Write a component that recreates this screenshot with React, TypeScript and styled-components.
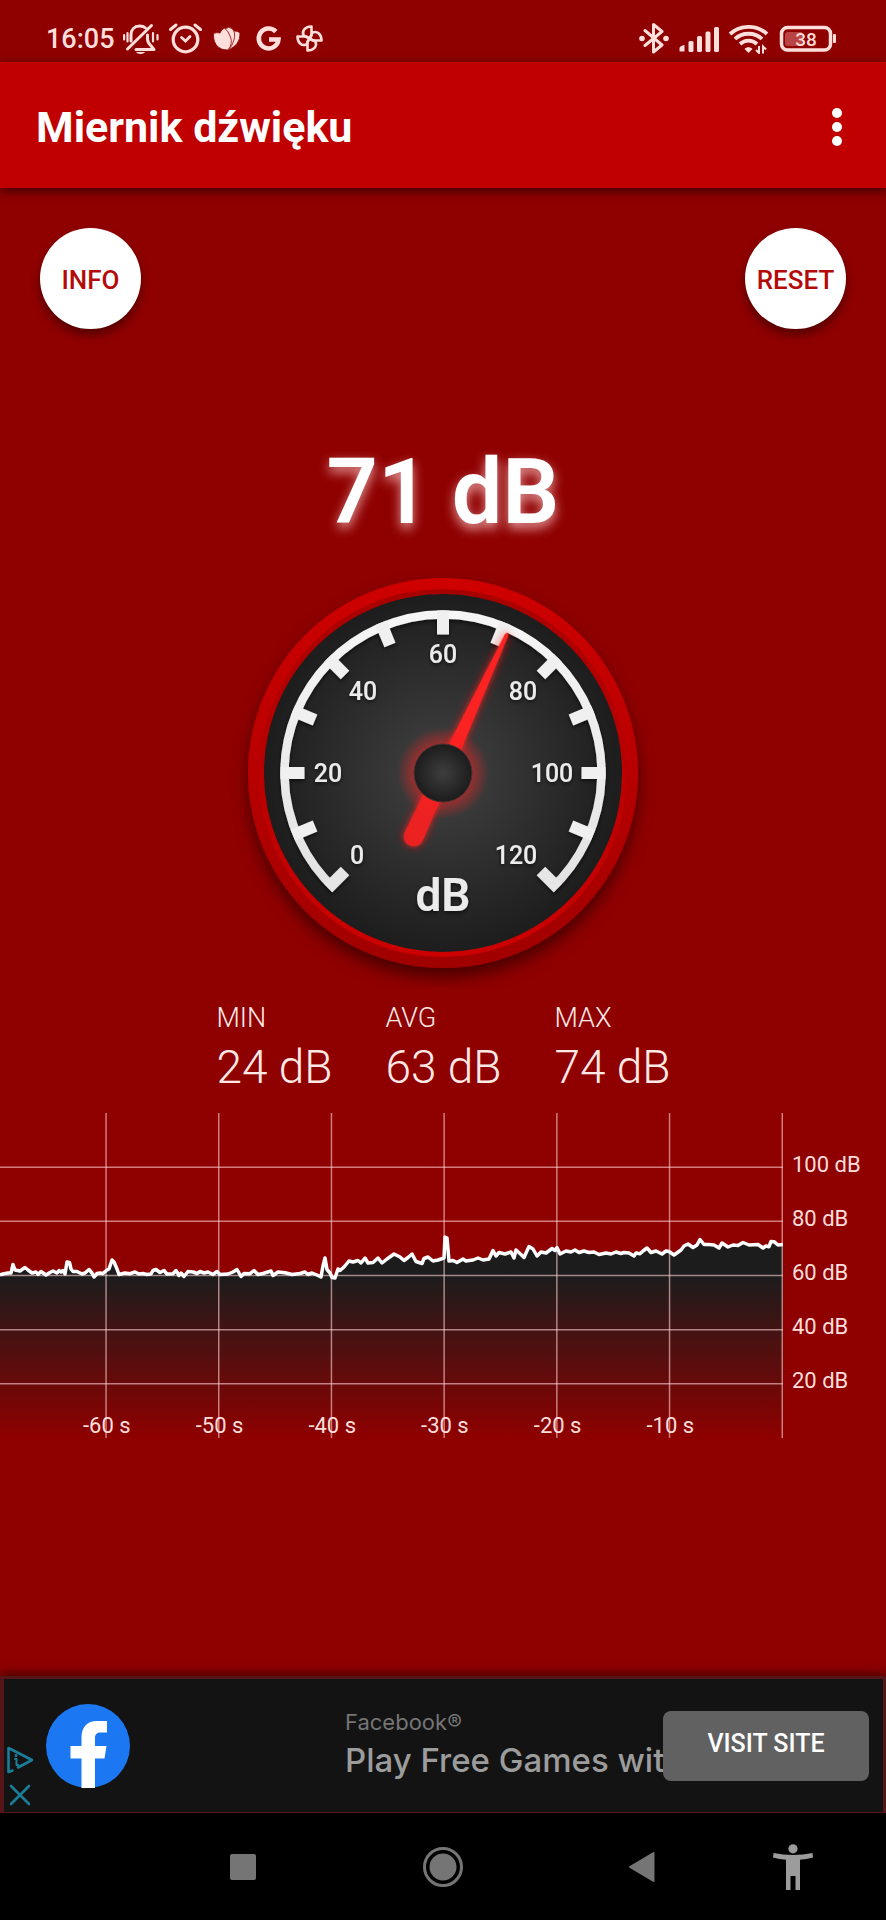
import React from 'react';
import styled, { createGlobalStyle } from 'styled-components';

const GlobalStyle = createGlobalStyle`
  * { box-sizing: border-box; }
  html, body, #root { height: 100%; }
  body {
    margin: 0;
    background: #8f0000;
    font-family: Roboto, "Liberation Sans", sans-serif;
  }
  button { border: 0; padding: 0; font: inherit; cursor: pointer; }
`;

const INK = '#ffdedb';

const Screen = styled.div`
  min-height: 100%;
  display: flex;
  flex-direction: column;
  background: #8f0000;
`;

/* ---------- status bar ---------- */

const StatusBar = styled.div`
  height: 62px;
  flex: none;
  display: flex;
  justify-content: space-between;
  padding: 22px 48px 0 46px;
  color: ${INK};
`;

const StatusGroup = styled.div`
  display: flex;
  align-items: flex-start;
  gap: 8px;
`;

const Clock = styled.span`
  font-size: 27px;
  line-height: 34px;
  font-weight: 500;
`;

const StatusIcon = styled.svg`
  height: 32px;
  flex: none;
  display: block;
`;

const StatusIcons = () => (
  <>
    <StatusIcon width="37" viewBox="1 0 37 32" fill="none" stroke={INK} strokeWidth="3" strokeLinecap="round">
      <path d="M9 19V13C9 7.500 12.500 4 17.500 4C20 4 22 4.600 23.500 6" />
      <path d="M25.500 13V17C25.500 22 29 23 32 27.500H14" strokeLinejoin="round" />
      <path d="M5.500 27L29.500 3.500" />
      <path d="M14 30H23C22 32.500 15 32.500 14 30Z" fill={INK} stroke="none" />
      <path d="M2.100 13V17.500M5.500 11V19.500M31 11V19.500M35.500 13V17.500" strokeWidth="2.200" />
    </StatusIcon>
    <StatusIcon width="34" viewBox="1 0 34 32" fill="none" stroke={INK} strokeWidth="3.300" strokeLinecap="round">
      <circle cx="18.500" cy="17.500" r="12.300" />
      <path d="M3.500 7.500L9 3M28 3L33.500 7.500" strokeWidth="3" />
      <path d="M14.500 15.500L18.500 19L23 14.500" strokeWidth="2.800" />
    </StatusIcon>
    <StatusIcon width="34" viewBox="0 0 34 32" fill={INK} stroke="#8f0000" strokeWidth="0.800">
      <path d="M23.500 9Q27.500 8.500 30 11Q30.500 23 18 28Q22 18 23.500 9Z" />
      <path d="M15 7Q18.500 4 22 6.500Q26 10 24 18Q22 25 18 28Z" />
      <path d="M3.500 11.500Q3 20 8 25Q12.500 28.500 18 28Q23 22 20.500 15Q18.500 9 14.500 6Q11 7.500 10 11Q7 10 3.500 11.500Z" />
    </StatusIcon>
    <StatusIcon width="34" viewBox="0 0 34 32" fill="none" stroke={INK} strokeWidth="4.500">
      <path d="M23.800 9.600A9.900 9.900 0 1 0 26.500 17.500H17" />
    </StatusIcon>
    <StatusIcon width="34" viewBox="0 0 34 32" fill="none" stroke={INK} strokeWidth="2.600" strokeLinejoin="round">
      {[0, 90, 180, 270].map((a) => (
        <path key={a} transform={`rotate(${a} 15.500 16.500)`} d="M17.500 4.500C11.500 4.500 7.500 8.500 9.500 13.500L15.500 16.500L17.500 13.500Z" />
      ))}
    </StatusIcon>
  </>
);

const Connectivity = () => (
  <>
    <StatusIcon width="32" viewBox="0 0 32 32" fill="none" stroke={INK} strokeWidth="3" strokeLinejoin="round" strokeLinecap="round">
      <path d="M7 8.500L24 23L15.500 30V2.500L24 9.500L7 23.500" />
      <circle cx="4" cy="16.500" r="2.800" fill={INK} stroke="none" />
      <circle cx="28" cy="16.500" r="2.800" fill={INK} stroke="none" />
    </StatusIcon>
    <StatusIcon width="42" viewBox="0 0 42 32" fill={INK}>
      <path d="M1.500 29.500V26Q2 24 6.500 23V29.500Z" />
      <rect x="10.500" y="19" width="5" height="11" rx="1.500" />
      <rect x="19" y="14" width="5" height="16" rx="1.500" />
      <rect x="27.500" y="9.500" width="5" height="20.500" rx="1.500" />
      <rect x="36" y="5" width="5" height="25" rx="1.500" />
    </StatusIcon>
    <StatusIcon width="42" viewBox="0 0 42 32" fill="none" stroke={INK} strokeWidth="3.800">
      <path d="M2 12C12 2.500 29 2.500 39 12" />
      <path d="M7 17C14 10 27 10 34 17" />
      <path d="M12 22C17 17.500 24 17.500 29 22" />
      <path d="M16.500 27C18.500 24.500 22.500 24.500 24.500 27L20.500 31Z" fill={INK} stroke="none" />
      <path d="M31 24V31L28 28M35 31.500V24.500L38 27.500" strokeWidth="2" />
    </StatusIcon>
    <StatusIcon width="60" viewBox="0 0 60 32" fill="none">
      <rect x="3.500" y="5.500" width="49" height="22.500" rx="6" stroke={INK} strokeWidth="3.500" />
      <path d="M7 13Q7 10 10 10H24V24H10Q7 24 7 21Z" fill="#ba4444" />
      <rect x="55" y="12" width="3" height="9" rx="1" fill={INK} />
      <text x="28" y="24" textAnchor="middle" fontFamily="Roboto" fontSize="19" fontWeight="500" fill={INK}>38</text>
    </StatusIcon>
  </>
);

/* ---------- app bar ---------- */

const AppBar = styled.header`
  height: 126px;
  flex: none;
  display: flex;
  align-items: center;
  justify-content: space-between;
  padding: 3px 31px 0 36px;
  background: #c00000;
  box-shadow: 0 3px 10px rgba(0, 0, 0, 0.6);
`;

const Title = styled.h1`
  margin: 0;
  font-size: 43px;
  line-height: 50px;
  font-weight: 700;
  color: #fff;
`;

const MenuButton = styled.button`
  width: 36px;
  height: 60px;
  display: flex;
  flex-direction: column;
  align-items: center;
  justify-content: center;
  gap: 4px;
  background: none;
`;

const Dot = styled.span`
  width: 10px;
  height: 10px;
  border-radius: 50%;
  background: #fff;
`;

/* ---------- meter ---------- */

const Main = styled.main`
  flex: 1;
  display: flex;
  flex-direction: column;
  align-items: center;
  padding-top: 40px;
`;

const Actions = styled.div`
  align-self: stretch;
  display: flex;
  justify-content: space-between;
  padding: 0 40px;
`;

const RoundButton = styled.button`
  && {
    width: 101px;
    height: 101px;
    padding-top: 2px;
    border-radius: 50%;
    background: #fff;
    color: #b50a0a;
    font-size: 26px;
    line-height: 32px;
    font-weight: 500;
    box-shadow: 0 6px 10px rgba(0, 0, 0, 0.4);
  }
`;

const Reading = styled.output`
  margin-top: 110px;
  font-size: 90px;
  line-height: 108px;
  font-weight: 600;
  color: #fff;
  text-shadow: 0 5px 12px rgba(255, 200, 200, 0.8);
`;

const GaugeArt = styled.svg`
  display: block;
  width: 430px;
  height: 430px;
  margin-top: 11px;
  font-family: Roboto, "Liberation Sans", sans-serif;
`;

const MARKS: [string, number, number][] = [
  ['0', -86, 91],
  ['20', -115, 9],
  ['40', -80, -73],
  ['60', 0, -110],
  ['80', 80, -73],
  ['100', 109, 9],
  ['120', 73, 91],
];

const Gauge = ({ value }: { value: number }) => (
  <GaugeArt viewBox="-215 -215 430 430" role="img" aria-label={`${value} dB`}>
    <defs>
      <radialGradient id="face">
        <stop offset="0" stopColor="#424242" />
        <stop offset="1" stopColor="#1d1d1d" />
      </radialGradient>
      <linearGradient id="rim" x1="0" y1="0" x2="0" y2="1">
        <stop offset="0" stopColor="#cf0000" />
        <stop offset="1" stopColor="#a00000" />
      </linearGradient>
      <linearGradient id="lip" x1="0" y1="0" x2="0" y2="1">
        <stop offset="0" stopColor="#a80000" />
        <stop offset="1" stopColor="#cc0000" />
      </linearGradient>
      <radialGradient id="hub">
        <stop offset="0" stopColor="#3e3e3e" />
        <stop offset="1" stopColor="#1c1c1c" />
      </radialGradient>
      <radialGradient id="halo">
        <stop offset="0.600" stopColor="#ff2020" stopOpacity="0.500" />
        <stop offset="1" stopColor="#ff2020" stopOpacity="0" />
      </radialGradient>
      <linearGradient id="scale" gradientUnits="userSpaceOnUse" x1="0" y1="-163" x2="0" y2="120">
        <stop offset="0" stopColor="#f6f6f6" />
        <stop offset="1" stopColor="#e2e2e2" />
      </linearGradient>
      <filter id="drop" x="-20%" y="-20%" width="140%" height="140%">
        <feDropShadow dx="0" dy="9" stdDeviation="8" floodColor="#000" floodOpacity="0.500" />
      </filter>
      <filter id="soft" x="-20%" y="-20%" width="140%" height="140%">
        <feDropShadow dx="0" dy="2" stdDeviation="2" floodColor="#000" floodOpacity="0.600" />
      </filter>
      <filter id="glow" filterUnits="userSpaceOnUse" x="-60" y="-190" width="120" height="300">
        <feDropShadow dx="0" dy="0" stdDeviation="4" floodColor="#ff1a1a" floodOpacity="0.800" />
      </filter>
    </defs>
    <circle r="195" fill="url(#rim)" filter="url(#drop)" />
    <circle r="184" fill="url(#lip)" />
    <circle r="179" fill="url(#face)" />
    <g filter="url(#soft)">
      <path d="M-108.100 115.900A158.500 158.500 0 1 1 108.100 115.900" fill="none" stroke="url(#scale)" strokeWidth="8.500" />
      {Array.from({ length: 13 }, (_, i) => (
        <g key={i} transform={`rotate(${-135 + i * 22.5})`}>
          <rect x="-6" y="-162.500" width="12" height="24" fill={i % 12 === 0 ? '#e6e6e6' : '#f0f0f0'} />
        </g>
      ))}
    </g>
    <g fill="#ebebeb" textAnchor="middle" fontSize="25" fontWeight="500" filter="url(#soft)">
      {MARKS.map(([label, x, y]) => (
        <text key={label} x={x} y={y}>{label}</text>
      ))}
      <text x="0" y="138" fontSize="46" fontWeight="600">dB</text>
    </g>
    <g transform={`rotate(${(value - 60) * 2.25})`}>
      <g filter="url(#glow)" fill="#fb2222">
        <path d="M-7 -24L-2 -152Q0 -157 2 -152L7 -24Z" />
        <path d="M-9 24L-10 70A10 10 0 0 0 10 70L9 24Z" fill="#ec2222" />
      </g>
    </g>
    <circle r="46" fill="url(#halo)" />
    <circle r="29" fill="url(#hub)" stroke="#4a3030" strokeWidth="1" />
  </GaugeArt>
);

const Stats = styled.dl`
  display: flex;
  gap: 54px;
  margin: 14px 0 0;
  color: #ffe9e6;
  font-weight: 300;
`;

const Stat = styled.div`
  width: 115px;
  white-space: nowrap;
`;

const StatName = styled.dt`
  font-size: 27px;
  line-height: 32px;
`;

const StatValue = styled.dd`
  margin: 6px 0 0;
  font-size: 46px;
  line-height: 54px;
`;

/* ---------- history chart ---------- */

const Chart = styled.section`
  align-self: stretch;
  display: flex;
  margin-top: 19px;
  color: ${INK};
`;

const Plot = styled.svg`
  flex: 1;
  min-width: 0;
  height: 326px;
  display: block;
  overflow: hidden;
  font-family: Roboto, "Liberation Sans", sans-serif;
`;

const Scale = styled.ul`
  width: 103px;
  margin: 0;
  padding: 38px 0 0 9px;
  list-style: none;
  font-size: 22px;
`;

const ScaleMark = styled.li`
  height: 54px;
  line-height: 28px;
`;

const HISTORY =
  '0,161.7 4,160.7 8,160 11,160 13,151.5 15,157 20,158 25,154.5 28,157 32,160 36,159 38,161.5 41,158.5 46,162 50,159.5 53,158 57,160 59,157.5 61,159 63,157.5 65,161 67,149 69.5,149.5 71,156 73,158.5 77,158.5 82,161 85,160 89,156.5 92,160 94,164 97,160.5 100,160 103,160.5 107,157 109,156 112,147 114,149 117,156 119,161.5 125,160 130,160.7 135,159 139,161 143,160.5 147,161.5 151,161 153,157.5 156,156.5 160,159.5 164,157.5 167,161 173,160.7 176,157.5 179,162.5 181,160 184,163.5 188,158.5 193,159 197,160.5 200,158.5 204,160 208,159 213,161.5 217,158.5 220,161.5 228,161 233,159 237,156.5 241,163.5 244,160.5 250,160.7 254,157.5 258,161.5 263,160.5 271,158 273,162.5 278,159 285,159.7 292,161.5 300,160.5 305,159 308,161.5 312,160 317,162 321,164 323,153 325,145 327,156.5 330,160 332,164.5 335,165 338,156 340,157.5 344,154 349,148 353,149 358,147.5 361,150 365,145 368,150 373,149.5 378,145 382,150 387,146 394,141 397,142.5 400,144 404,147.5 408,144.5 412,141 416,148.5 422,150.5 424,145.5 428,144 433,148 438,147 444,145 445,124 447,125 449,148 453,147.5 457,149.5 463,146 466,148 473,147 478,145 483,147 489,146 493,137.5 496,143 499,139.5 505,141 511,139 514,145 516,137 521,141.5 524,144.5 529,133.5 533,136 537,143 541,139 546,140 552,135.5 555,137.5 557,134.5 560,141 566,138 571,139 575,137 579,139.5 584,138 589,139.5 594,139 599,141.5 606,140 611,141 616,139 621,140.5 624,139.5 629,140 634,143 636,140 640,140.7 643,138 647,135 651,139.5 656,138 662,141 666,138 669,138.5 674,142 681,137 684,133 688,131 693,134.5 697,132 700,126.5 704,131.5 709,131.5 714,132 719,135 722,130 728,134 733,132 738,132.5 743,129.5 749,132 758,131.5 763,135 766,133 769,133.7 771,128.5 774,128.7 778,132 783,131.5';

const LEVELS = [100, 80, 60, 40, 20];
const SECONDS = [60, 50, 40, 30, 20, 10, 0];

const History = () => (
  <Chart>
    <Plot role="img" aria-label="dB / s">
      <defs>
        <linearGradient id="fill" gradientUnits="userSpaceOnUse" x1="0" y1="163" x2="0" y2="325">
          <stop offset="0" stopColor="#1c1c1c" />
          <stop offset="1" stopColor="#1c1c1c" stopOpacity="0" />
        </linearGradient>
      </defs>
      <svg x="100%" overflow="visible">
        <g transform="translate(-783)">
          <polygon points={`0,325 ${HISTORY} 783,325`} fill="url(#fill)" />
        </g>
        <g stroke="#ffd0d0" strokeOpacity="0.600" strokeWidth="1.500">
          {LEVELS.map((level) => (
            <path key={level} d={`M-4000 ${325 - level * 2.708}H0`} />
          ))}
          {SECONDS.map((s) => (
            <path key={s} d={`M${-0.75 - s * 11.27} 0V325`} />
          ))}
        </g>
        <g transform="translate(-783)">
          <polyline points={HISTORY} fill="none" stroke="#fff" strokeWidth="3.500" strokeLinejoin="round" />
        </g>
        <g fill={INK} fontSize="22" textAnchor="middle">
          {SECONDS.filter((s) => s > 0).map((s) => (
            <text key={s} x={-s * 11.27} y="320">{`-${s} s`}</text>
          ))}
        </g>
      </svg>
    </Plot>
    <Scale>
      {LEVELS.map((level) => (
        <ScaleMark key={level}>{level} dB</ScaleMark>
      ))}
    </Scale>
  </Chart>
);

/* ---------- advert ---------- */

const Advert = styled.aside`
  height: 137px;
  flex: none;
  display: flex;
  align-items: center;
  border: solid #561518;
  border-width: 3px 3px 1px 4px;
  padding-right: 14px;
  background: #131313;
  box-shadow: 0 -2px 10px rgba(0, 0, 0, 0.6);
`;

const AdControls = styled.div`
  align-self: flex-end;
  display: flex;
  flex-direction: column;
  gap: 8px;
  width: 42px;
  padding: 0 0 2px 2px;
`;

const AdControl = styled.button`
  width: 28px;
  height: 28px;
  background: none;
  svg { display: block; }
`;

const AdLogo = styled.svg`
  width: 84px;
  height: 84px;
  flex: none;
`;

const AdText = styled.div`
  flex: 1;
  min-width: 0;
  margin-left: 215px;
  padding-bottom: 4px;
  white-space: nowrap;
  font-family: Inter, "Open Sans", sans-serif;
`;

const Advertiser = styled.div`
  font-size: 22px;
  line-height: 28px;
  color: #757575;
`;

const Headline = styled.div`
  margin-top: 4px;
  font-size: 33px;
  line-height: 40px;
  font-weight: 500;
  color: #9c9c9c;
`;

const VisitLink = styled.a`
  flex: none;
  width: 206px;
  height: 70px;
  display: flex;
  align-items: center;
  justify-content: center;
  padding-bottom: 4px;
  border-radius: 8px;
  background: #616161;
  color: #fff;
  font-size: 25px;
  line-height: 30px;
  font-weight: 500;
  text-decoration: none;
`;

/* ---------- navigation ---------- */

const NavBar = styled.nav`
  height: 107px;
  flex: none;
  display: grid;
  grid-template-columns: 144fr 198fr 202fr 196fr 106fr 40fr;
  background: #000;
`;

const NavButton = styled.button<{ $first?: boolean }>`
  grid-column-start: ${(p) => (p.$first ? 2 : 'auto')};
  display: flex;
  align-items: center;
  justify-content: center;
  background: none;
`;

export default function App() {
  return (
    <Screen>
      <GlobalStyle />
      <StatusBar>
        <StatusGroup>
          <Clock>16:05</Clock>
          <StatusIcons />
        </StatusGroup>
        <StatusGroup>
          <Connectivity />
        </StatusGroup>
      </StatusBar>
      <AppBar>
        <Title>Miernik dźwięku</Title>
        <MenuButton aria-label="Menu">
          <Dot />
          <Dot />
          <Dot />
        </MenuButton>
      </AppBar>
      <Main>
        <Actions>
          <RoundButton>INFO</RoundButton>
          <RoundButton>RESET</RoundButton>
        </Actions>
        <Reading>71 dB</Reading>
        <Gauge value={71} />
        <Stats>
          {[['MIN', 24], ['AVG', 63], ['MAX', 74]].map(([name, value]) => (
            <Stat key={name}>
              <StatName>{name}</StatName>
              <StatValue>{value} dB</StatValue>
            </Stat>
          ))}
        </Stats>
        <History />
      </Main>
      <Advert>
        <AdControls>
          <AdControl aria-label="AdChoices">
            <svg width="28" height="28" viewBox="0 0 28 28" fill="none" stroke="#1b7d98" strokeWidth="2.600" strokeLinejoin="round" strokeLinecap="round">
              <path d="M6.500 24.500L2.500 26V2L26 14L12 21.500" />
              <path d="M9 13H10.500V19H12.500" strokeWidth="2" />
              <circle cx="10" cy="9.500" r="1.500" fill="#1b7d98" stroke="none" />
            </svg>
          </AdControl>
          <AdControl aria-label="Close">
            <svg width="28" height="28" viewBox="0 0 28 28" fill="none" stroke="#1b7d98" strokeWidth="2.600" strokeLinecap="round">
              <path d="M5 4L23 22M23 4L5 22" />
            </svg>
          </AdControl>
        </AdControls>
        <AdLogo viewBox="0 0 84 84" aria-hidden="true">
          <circle cx="42" cy="42" r="42" fill="#1b78f2" />
          <path d="M35.500 84V54.500H24.500V42H35.500V34C35.500 23 41 17 51 17H61V28.500H55C50.500 28.500 49 30.500 49 34V42H60.500L58.500 54.500H49V84Z" fill="#fff" />
        </AdLogo>
        <AdText>
          <Advertiser>Facebook®</Advertiser>
          <Headline>Play Free Games wit</Headline>
        </AdText>
        <VisitLink href="#">VISIT SITE</VisitLink>
      </Advert>
      <NavBar>
        <NavButton $first aria-label="Recent apps">
          <svg width="28" height="28"><rect x="1" y="1" width="26" height="26" rx="2" fill="#757575" /></svg>
        </NavButton>
        <NavButton aria-label="Home">
          <svg width="42" height="42" viewBox="-21 -21 42 42">
            <circle r="18.500" fill="none" stroke="#757575" strokeWidth="3" />
            <circle r="13.500" fill="#757575" />
          </svg>
        </NavButton>
        <NavButton aria-label="Back">
          <svg width="28" height="32" viewBox="0 0 28 32">
            <path d="M2 16L25.500 2V30Z" fill="#757575" stroke="#757575" strokeWidth="2" strokeLinejoin="round" />
          </svg>
        </NavButton>
        <NavButton aria-label="Accessibility">
          <svg width="42" height="46" viewBox="0 0 42 46" fill="#9c9c9c">
            <circle cx="21" cy="4.800" r="4.600" />
            <path d="M1.500 9Q21 13 40.500 9L41 13.500Q34.500 15.200 28 15.700V46H23.500V32H18.500V46H14V15.700Q7.500 15.200 1 13.500Z" />
          </svg>
        </NavButton>
      </NavBar>
    </Screen>
  );
}
